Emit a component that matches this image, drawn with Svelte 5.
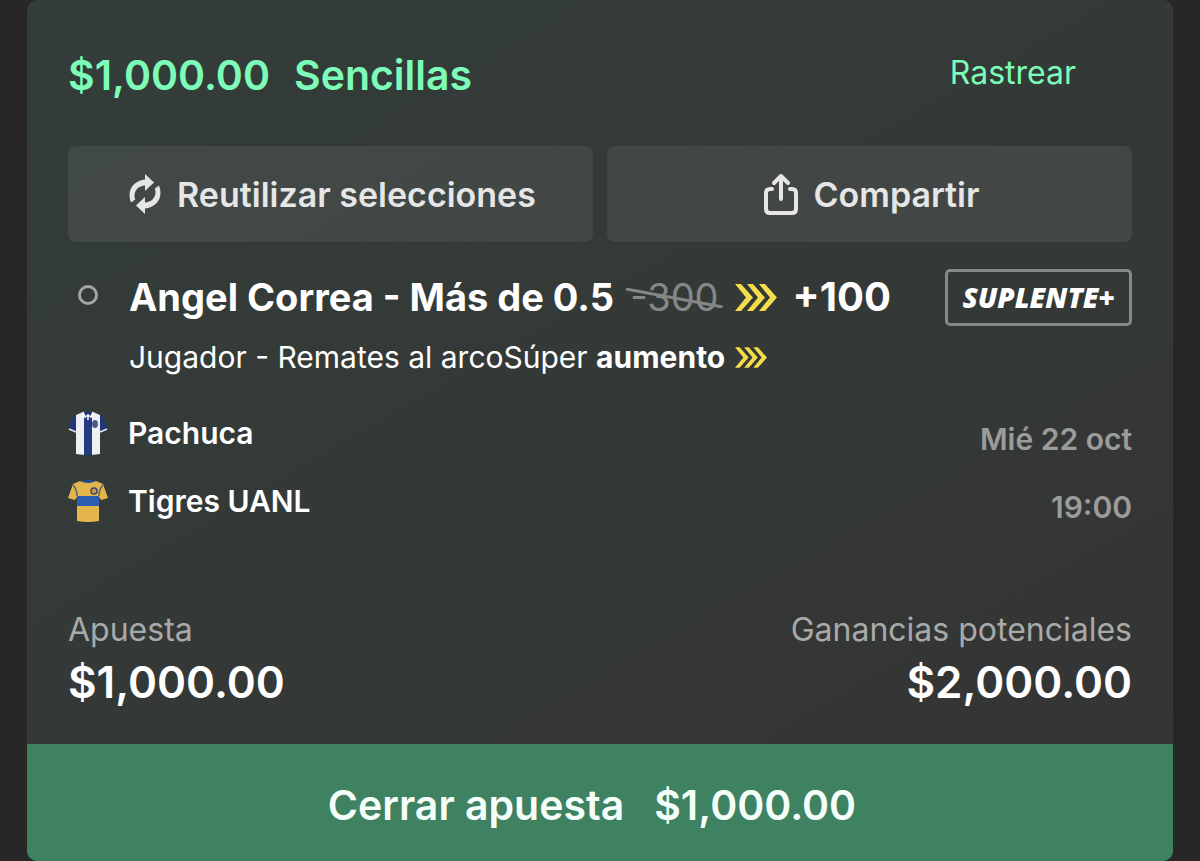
<script lang="ts">
  const stake = '$1,000.00';
  const teams = [
    { name: 'Pachuca', kit: 'pachuca' },
    { name: 'Tigres UANL', kit: 'tigres' },
  ];
</script>

{#snippet chevrons()}
  <svg class="chevrons" viewBox="0 0 42 27" aria-hidden="true">
    <g fill="#f4dc4a">
      <path d="M0 0h6l12 13.500L6 27H0l11-13.500z" />
      <path d="M12 0h6l12 13.500L18 27h-6l11-13.500z" />
      <path d="M24 0h6l12 13.500L30 27h-6l11-13.500z" />
    </g>
  </svg>
{/snippet}

<main class="bet">
  <div class="body">
    <header class="head">
      <h1><span>{stake}</span><span>Sencillas</span></h1>
      <a class="track" href="#rastrear">Rastrear</a>
    </header>

    <div class="actions">
      <button type="button" class="action">
        <svg width="32" height="42" viewBox="0 0 32 42" fill="#e6e6e6" aria-hidden="true">
          <path d="M16 1l9 8.500-9 8.500v-5.500c-6 .3-10.500 4.500-10.500 10 0 1.500.2 2.700.7 4L2 29.500C1 27 .5 24.500.5 22 .5 13.500 7.500 7 16 6.500z" />
          <path d="M16 41l-9-8.500L16 24v5.500c6-.3 10.500-4.500 10.500-10 0-1.500-.2-2.700-.7-4L30 12.500c1 2.500 1.500 5 1.500 7.500 0 8.500-7 15-15.500 15.500z" />
        </svg>
        Reutilizar selecciones
      </button>
      <button type="button" class="action">
        <svg width="34" height="42" viewBox="0 0 34 42" fill="none" stroke="#e6e6e6" stroke-width="4" stroke-linecap="round" stroke-linejoin="round" aria-hidden="true">
          <path d="M8 16H6q-4 0-4 4v16q0 4 4 4h22q4 0 4-4V20q0-4-4-4h-2" />
          <path d="M17 26V3M10 10l7-7 7 7" />
        </svg>
        Compartir
      </button>
    </div>

    <section class="selection">
      <span class="dot"></span>
      <div class="pick">
        <h2>
          Angel Correa - Más de 0.5
          <span class="old">-300<svg viewBox="0 0 92 20" preserveAspectRatio="none" aria-hidden="true"><path d="M0 1l92 18" stroke="#858887" stroke-width="3" /></svg></span>
          {@render chevrons()}
          <span class="odds">+100</span>
        </h2>
        <p><span>Jugador - Remates al arcoSúper <b>aumento</b></span> {@render chevrons()}</p>
      </div>
      <span class="badge">SUPLENTE+</span>
    </section>

    <section class="match">
      <ul>
        {#each teams as team}
          <li>
            <svg width="40" height="44" viewBox="0 0 40 44" aria-hidden="true">
              {#if team.kit === 'pachuca'}
                <path d="M10 3L5 5 1 18l7 3 3-6zM30 3l5 2 4 13-7 3-3-6z" fill="#20377c" />
                <path d="M1 18l7 3M39 18l-7 3" stroke="#dfe3ec" stroke-width="1.500" />
                <path d="M8 4l7-3h10l7 3v39q-12 2-24 0z" fill="#eef0f6" />
                <path d="M16 4h8v40h-8z" fill="#213a80" />
                <path d="M15 1h10l-3 5h-4z" fill="#20377c" />
                <path d="M15 1l2 5 3-2 3 2 2-5M20 4v5" fill="none" stroke="#fff" stroke-width="1.500" />
                <ellipse cx="27" cy="13" rx="3" ry="4" fill="#4c5c90" />
              {:else}
                <path d="M12 2L5 5 0 19l7 2 2-3v24q11 2 22 0V18l2 3 7-2-5-14-7-3q-8 2-16 0z" fill="#e3b54a" />
                <path d="M12 2q8-2 16 0-8 4-16 0z" fill="#244a86" />
                <path d="M5 6q4 4 4 11M35 6q-4 4-4 11" fill="none" stroke="#566267" stroke-width="1.500" />
                <path d="M9 17h22v10H9z" fill="#2b5db3" />
                <circle cx="26" cy="12" r="3" fill="#d89b45" stroke="#334b70" stroke-width="1.500" />
              {/if}
            </svg>
            {team.name}
          </li>
        {/each}
      </ul>
      <div class="date">
        <span>Mié 22 oct</span>
        <span>19:00</span>
      </div>
    </section>

    <dl class="totals">
      <div>
        <dt>Apuesta</dt>
        <dd>{stake}</dd>
      </div>
      <div>
        <dt>Ganancias potenciales</dt>
        <dd>$2,000.00</dd>
      </div>
    </dl>
  </div>

  <button type="button" class="cashout"><span>Cerrar apuesta</span><span>{stake}</span></button>
</main>

<style>
  :global(body) {
    margin: 0;
    background: #272727;
  }

  .bet {
    margin: 0 27px;
    border-radius: 10px;
    overflow: hidden;
    font-family: Inter, 'Liberation Sans', sans-serif;
    color: #fff;
    background: linear-gradient(150deg, #333d39 0%, #343937 50%, #343434 100%);
  }

  .body {
    padding: 48px 41px 34px;
  }

  .head {
    display: flex;
    justify-content: space-between;
    padding-right: 56px;
    color: #7dfcb9;
  }

  h1 {
    display: flex;
    gap: 24px;
    margin: 0;
    font-size: 41px;
    line-height: 54px;
    font-weight: 600;
  }

  .track {
    font-size: 32px;
    line-height: 50px;
    color: inherit;
    text-decoration: none;
  }

  .actions {
    display: grid;
    grid-template-columns: 1fr 1fr;
    gap: 14px;
    margin-top: 44px;
  }

  .action {
    display: flex;
    align-items: center;
    justify-content: center;
    gap: 16px;
    height: 96px;
    padding: 0 0 0 4px;
    border: 0;
    border-radius: 8px;
    background: rgba(255, 255, 255, 0.07);
    color: #e6e6e6;
    font: 600 34px Inter, 'Liberation Sans', sans-serif;
  }

  .selection {
    display: flex;
    margin-top: 27px;
  }

  .dot {
    box-sizing: border-box;
    width: 20px;
    height: 20px;
    margin: 16px 31px 0 10px;
    border: 3px solid #a3a6a5;
    border-radius: 50%;
  }

  .pick {
    flex: 1;
  }

  h2 {
    display: flex;
    align-items: center;
    gap: 16px;
    margin: 0;
    font-size: 38px;
    line-height: 56px;
    font-weight: 700;
    white-space: nowrap;
  }

  .odds {
    font-size: 40px;
  }

  .old {
    position: relative;
    color: #858887;
    font-weight: 400;
  }

  .old svg {
    position: absolute;
    left: -4px;
    top: 19px;
    width: calc(100% + 8px);
    height: 20px;
  }

  .chevrons {
    width: 42px;
    height: 27px;
  }

  p {
    display: flex;
    align-items: center;
    gap: 10px;
    margin: 12px 0 0;
    font-size: 30px;
    line-height: 40px;
  }

  p .chevrons {
    width: 32px;
    height: 21px;
  }

  .badge {
    box-sizing: border-box;
    height: 57px;
    padding: 0 14px;
    border: 3px solid #858887;
    border-radius: 5px;
    font: italic 800 28px/51px 'Open Sans', sans-serif;
  }

  .match {
    display: flex;
    justify-content: space-between;
    margin-top: 22px;
    font-size: 30px;
    line-height: 68px;
    font-weight: 600;
  }

  ul {
    margin: 0;
    padding: 0;
    list-style: none;
  }

  li {
    display: flex;
    align-items: center;
    gap: 20px;
  }

  .date {
    display: flex;
    flex-direction: column;
    padding-top: 6px;
    text-align: right;
    color: #9a9c9b;
  }

  .totals {
    display: flex;
    justify-content: space-between;
    margin: 64px 0 0;
  }

  .totals div:last-child {
    text-align: right;
  }

  dt {
    font-size: 32px;
    line-height: 50px;
    color: #a8aaa9;
  }

  dd {
    margin: 0;
    font-size: 44px;
    line-height: 55px;
    font-weight: 600;
  }

  .cashout {
    display: flex;
    justify-content: center;
    gap: 30px;
    width: 100%;
    padding: 33px 16px 28px 0;
    border: 0;
    background: #3f8262;
    color: #f4fff9;
    font: 600 41px/56px Inter, 'Liberation Sans', sans-serif;
  }
</style>
